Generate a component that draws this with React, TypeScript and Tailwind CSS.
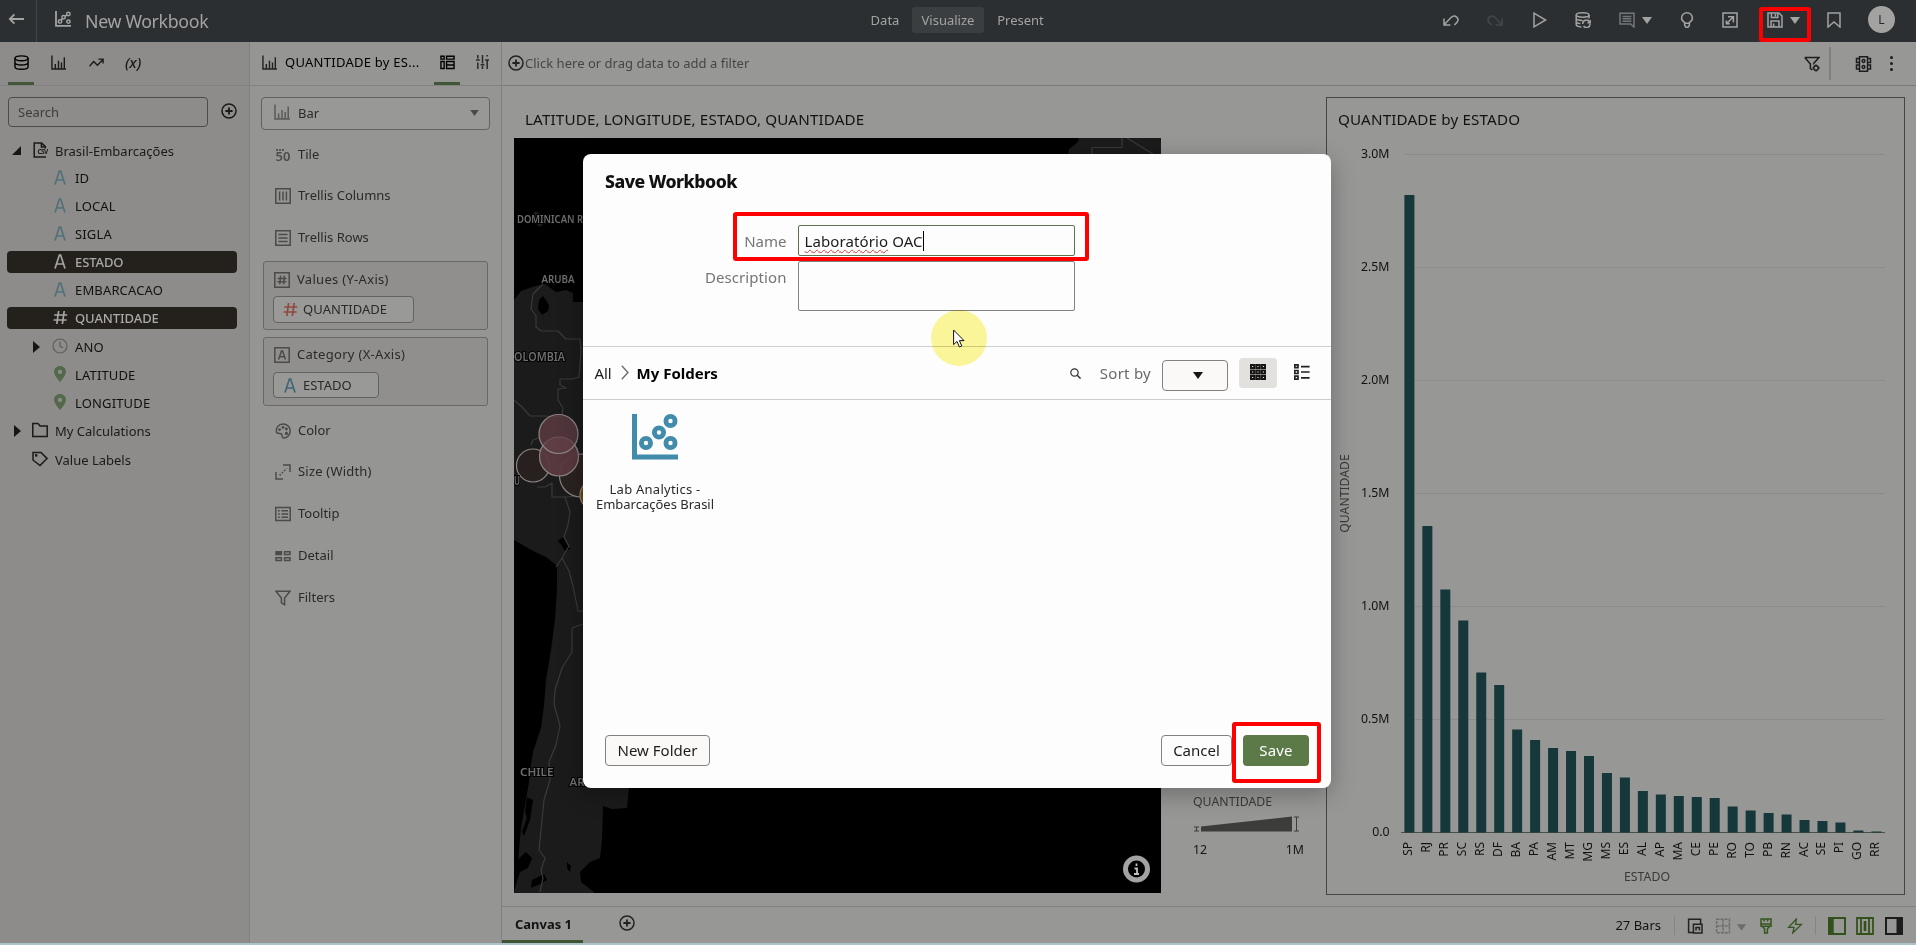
import type { ReactNode } from "react";

type IconProps = { className?: string; children?: ReactNode; box?: string };

function Svg({ className = "", children, box = "0 0 16 16" }: IconProps) {
  return (
    <svg viewBox={box} fill="none" stroke="currentColor" strokeWidth={1.5} className={`shrink-0 ${className}`}>
      {children}
    </svg>
  );
}

const S = "size-4";

const BarIcon = ({ className = S }: IconProps) => (
  <Svg className={className}>
    <path d="M1 0.5V15H16M4.6 15V9.5M8 15V6M11.2 15V8M14.2 15V2.5" />
  </Svg>
);
const DatabaseIcon = ({ className = S }: IconProps) => (
  <Svg className={className}>
    <ellipse cx="8" cy="3.5" rx="7" ry="2.6" />
    <path d="M1 3.5V12.4C1 14 4 15.2 8 15.2S15 14 15 12.4V3.5M1 8C1 9.4 4 10.6 8 10.6S15 9.4 15 8" />
  </Svg>
);
const PlusCircle = ({ className = S }: IconProps) => (
  <Svg className={className}>
    <circle cx="8" cy="8" r="7" />
    <path d="M8 4.4V11.6M4.4 8H11.6" strokeWidth={1.8} />
  </Svg>
);
const Caret = ({ className = "h-[7px] w-[10px]" }: IconProps) => (
  <svg viewBox="0 0 10 7" className={`shrink-0 ${className}`}>
    <path d="M0 0H10L5 7Z" fill="currentColor" />
  </svg>
);
const LetterA = ({ className = "" }: IconProps) => (
  <Svg className={`h-[15px] w-3 ${className}`} box="0 0 12 15">
    <path d="M1 14.5L5.4 1H6.6L11 14.5M2.6 10H9.4" strokeWidth={1.7} />
  </Svg>
);
const Hash = ({ className = "" }: IconProps) => (
  <Svg className={`size-[15px] ${className}`} box="0 0 15 15">
    <path d="M5.6 1L3.8 14M11.2 1L9.4 14M1.2 5H14.2M0.6 10H13.6" strokeWidth={1.7} />
  </Svg>
);
const Pin = () => (
  <svg viewBox="0 0 12 16" className="h-4 w-3 shrink-0 text-[#54694b]">
    <path d="M6 0C2.6 0 0 2.5 0 5.8C0 9.8 6 16 6 16S12 9.8 12 5.8C12 2.5 9.4 0 6 0ZM6 3.8A2.1 2.1 0 1 1 6 8A2.1 2.1 0 0 1 6 3.8Z" fill="currentColor" fillRule="evenodd" />
  </svg>
);
const ScatterIcon = ({ className = "" }: IconProps) => (
  <Svg className={className} box="0 0 46 46">
    <path d="M2.5 0V43H46" strokeWidth={5} />
    <circle cx="14" cy="29" r="4.6" strokeWidth={4.8} />
    <circle cx="27" cy="18.5" r="4.6" strokeWidth={4.8} />
    <circle cx="38.5" cy="7" r="4.6" strokeWidth={4.8} />
    <circle cx="38.5" cy="29" r="4.6" strokeWidth={4.8} />
  </Svg>
);

function Header() {
  return (
    <header className="flex h-[42px] shrink-0 items-center bg-[#2b2f32] text-[#a3a3a2]">
      <div className="flex w-[861px] items-center">
        <div className="flex h-[42px] w-[37px] items-center border-r border-[#42464a] pb-1 pl-2">
          <Svg className={S}>
            <path d="M16 8H2M6.4 3.4L1.8 8L6.4 12.6" strokeWidth={1.8} />
          </Svg>
        </div>
        <Svg className="mb-1 ml-[18px] size-4">
          <path d="M1 0V14.8H16" strokeWidth={1.8} />
          <circle cx="5" cy="10.4" r="1.7" />
          <circle cx="8.6" cy="6.2" r="1.7" />
          <circle cx="13.4" cy="3" r="1.7" />
          <circle cx="13.4" cy="10.6" r="1.7" />
          <path d="M6.2 9.2L7.4 7.6M9.9 5.2L12 4" />
        </Svg>
        <h1 className="ml-[14px] text-[17.8px] tracking-[-0.35px]">New Workbook</h1>
      </div>
      <nav className="flex items-center pb-0.5 text-[13px]">
        <span className="w-12 pt-0.5 text-center">Data</span>
        <span className="ml-[3px] flex h-[26px] w-[72px] items-center justify-center rounded-[3px] bg-[#3a3e40] pt-0.5">Visualize</span>
        <span className="ml-1 w-[65px] pt-0.5 text-center">Present</span>
      </nav>
      <div className="ml-auto flex items-center pr-[21px] pb-[3px]">
        <Svg className={S}>
          <path d="M1 6.5V13H7.4M1.4 12.6L8 5.6C12 1.8 17 6.6 14 10.4L11.4 13" />
        </Svg>
        <Svg className="ml-7 size-4 text-[#44484b]">
          <path d="M15 6.5V13H8.6M14.6 12.6L8 5.6C4 1.8 -1 6.6 2 10.4L4.6 13" />
        </Svg>
        <Svg className="ml-[29px] size-4">
          <path d="M2 1.2V14.8L13.6 8Z" />
        </Svg>
        <Svg className="ml-[27px] size-4">
          <ellipse cx="7.6" cy="3" rx="6.4" ry="2.2" />
          <path d="M1.2 3V12.6C1.2 14 3.6 14.8 6.4 14.9M14 3V6.4M1.2 6.2C1.2 7.4 4 8.4 7.6 8.4M1.2 9.5C1.2 10.6 3 11.4 5.4 11.6M7.8 12A3.5 3.5 0 0 1 14.4 10M15.2 8V10.8H12.4M15 11.8A3.5 3.5 0 0 1 8.6 14" />
        </Svg>
        <Svg className="ml-7 size-4 text-[#74777a]">
          <path d="M1 1.2H15V15L11.6 12H1ZM3.6 4.4H12.4M3.6 6.8H12.4M3.6 9.2H12.4" />
        </Svg>
        <Caret className="mt-0.5 ml-[7px] h-[7px] w-[10px]" />
        <Svg className="ml-[27px] size-4">
          <path d="M5.6 10.4C3.6 9.4 2.6 8 2.6 6A5.4 5.2 0 0 1 13.4 6C13.4 8 12.4 9.4 10.4 10.4" />
          <path d="M5.6 10V13.2L7 15.2H9L10.4 13.2V10M5.6 11.2H10.4" />
        </Svg>
        <Svg className="ml-[27px] size-4">
          <path d="M1 1H15V15H1ZM6 4.8H11.4V10.4M11.2 5L5 11.2M4.4 8.4V11.8H7.8" />
        </Svg>
        <Svg className="ml-[29px] size-4">
          <path d="M1 1H12L15 4V15H1ZM4.4 1V5.6H10.8V1M8.4 2V4.4M4 15V9H12V15M6.6 11.4V15" />
        </Svg>
        <Caret className="mt-0.5 ml-[7px] h-[7px] w-[10px]" />
        <Svg className="ml-[26px] size-4">
          <path d="M2 1H14V15L8 10L2 15Z" />
        </Svg>
        <div className="ml-[26px] flex size-[27px] items-center justify-center rounded-full bg-[#a2a2a1] text-[12px] text-[#22282c]">L</div>
      </div>
    </header>
  );
}

type Field = { name: string; icon: ReactNode; selected?: boolean; expandable?: boolean };
const blue = "text-[#527079]";
const fields: Field[] = [
  { name: "ID", icon: <LetterA className={blue} /> },
  { name: "LOCAL", icon: <LetterA className={blue} /> },
  { name: "SIGLA", icon: <LetterA className={blue} /> },
  { name: "ESTADO", icon: <LetterA className="text-[#a5a5a3]" />, selected: true },
  { name: "EMBARCACAO", icon: <LetterA className={blue} /> },
  { name: "QUANTIDADE", icon: <Hash className="text-[#a5a5a3]" />, selected: true },
  {
    name: "ANO",
    expandable: true,
    icon: (
      <Svg className="size-4 text-[#5f5d5b]">
        <circle cx="8" cy="8" r="7" strokeWidth={1.2} />
        <path d="M8 3.4V8.4L11 9.8" strokeWidth={1.2} />
      </Svg>
    ),
  },
  { name: "LATITUDE", icon: <Pin /> },
  { name: "LONGITUDE", icon: <Pin /> },
];

const RightArrow = ({ className = "" }: IconProps) => (
  <svg viewBox="0 0 7 12" className={`h-3 w-[7px] shrink-0 text-[#171615] ${className}`}>
    <path d="M0 0L7 6L0 12Z" fill="currentColor" />
  </svg>
);

function DataPanel() {
  return (
    <aside className="flex w-[250px] shrink-0 flex-col border-r border-[#80807e] bg-[#8e8c8a] text-[#1b1a19]">
      <div className="flex h-[44px] shrink-0 border-b border-[#82817f] pl-2">
        <div className="flex w-[26px] items-center justify-center border-b-[3px] border-[#42563a] text-black">
          <DatabaseIcon className="size-[15px]" />
        </div>
        <div className="flex items-center pb-[3px] pl-[17px]">
          <BarIcon className="size-[15px]" />
          <Svg className="ml-[23px] size-[15px]">
            <path d="M0.5 12L5 7L9 11L14.6 5M10 4.4H15V9" />
          </Svg>
          <span className="ml-[21px] text-[15px] font-medium italic tracking-[-0.2px]">(x)</span>
        </div>
      </div>
      <div className="mt-[11px] flex items-center pl-2">
        <div className="flex h-[30px] w-[200px] items-center rounded border border-[#4c4b49] pt-px pl-[9px] text-[13px] text-[#3d3c3a]">Search</div>
        <PlusCircle className="mb-[3px] ml-[13px] size-4" />
      </div>
      <div className="mt-[10px] flex flex-col text-[13px]">
        <div className="flex h-[27px] items-center pl-3">
          <svg viewBox="0 0 9 9" className="size-[9px] text-[#171615]">
            <path d="M9 0V9H0Z" fill="currentColor" />
          </svg>
          <Svg className="mb-0.5 ml-3 size-4">
            <path d="M13 15H1.2V1H8.6L12.4 4.6V6.4M8.4 1V5H12.6" />
            <text x="4.4" y="12.4" fontSize="6.6" fontWeight="700" fill="currentColor" stroke="none" textLength="11">CSV</text>
          </Svg>
          <span className="ml-[6px] pt-0.5">Brasil-Embarcações</span>
        </div>
        {fields.map((f) => (
          <div key={f.name} className={`flex items-center px-[7px] ${f.name === "QUANTIDADE" ? "h-[29px] pb-px" : "h-7"}`}>
            <div className={`flex h-[22px] w-[230px] items-center rounded ${f.selected ? "bg-[#24211d] font-medium text-[#a9a9a7]" : "text-[#111]"}`}>
              <span className="flex w-[43px] items-center pl-[26px]">{f.expandable && <RightArrow />}</span>
              <span className="flex w-[20px] items-center justify-center pb-0.5">{f.icon}</span>
              <span className={`ml-[5px] pt-0.5 ${f.selected ? "tracking-[-0.1px]" : "tracking-[0.15px]"}`}>{f.name}</span>
            </div>
          </div>
        ))}
        <div className="flex h-7 items-center pl-[14px]">
          <RightArrow />
          <Svg className="mb-0.5 ml-[11px] size-4">
            <path d="M0.8 1.4H6L8 4H15.2V14.6H0.8Z" />
          </Svg>
          <span className="ml-[7px] pt-0.5">My Calculations</span>
        </div>
        <div className="flex h-[29px] items-center pl-8">
          <Svg className="mb-0.5 size-4">
            <path d="M1 1.4H9L15 7.4L8 14.6L1 9Z" />
            <circle cx="4.2" cy="4.4" r="0.6" />
          </Svg>
          <span className="ml-[7px] pt-0.5">Value Labels</span>
        </div>
      </div>
    </aside>
  );
}

function Slot({ icon, label, className = "" }: { icon: ReactNode; label: string; className?: string }) {
  return (
    <div className={`flex items-center text-[13px] ${className}`}>
      <span className="flex w-4 justify-center text-[#4b4b49]">{icon}</span>
      <span className="ml-[7px]">{label}</span>
    </div>
  );
}

function GrammarPanel() {
  return (
    <aside className="flex w-[252px] shrink-0 flex-col border-r border-[#80807e] bg-[#959593] text-[#2b2a29]">
      <div className="flex h-[44px] shrink-0 border-b border-[#82827f] pl-3">
        <div className="flex w-[172px] items-center pb-[2px] text-black">
          <BarIcon className="size-[15px] text-[#222]" />
          <span className="ml-2 whitespace-nowrap text-[13px] tracking-[0.26px]">QUANTIDADE by ES...</span>
        </div>
        <div className="flex w-[26px] items-center justify-center border-b-[3px] border-[#42563a] text-black">
          <Svg className="size-[15px]">
            <path d="M1 1.4H4.4V4.4H1ZM7 1.4H15V4.4H7ZM1 7H4.4V14.4H1ZM7 7H15V14.4H7ZM7 10.6H15" />
          </Svg>
        </div>
        <div className="flex items-center pb-[3px] pl-4">
          <Svg className="h-[14px] w-[13px]" box="0 0 13 14">
            <path d="M1.8 0V3.4M1.8 7.6V14M0 5H3.8M6.5 0V8.4M6.5 11V14M4.6 9.8H8.4M11.2 0V1.6M11.2 5.4V14M9.2 5H13M6.5 4.6V5.6" />
          </Svg>
        </div>
      </div>
      <div className="mt-[11px] ml-[11px] flex h-[33px] w-[229px] items-center rounded border border-[#62625f] bg-[#989896] pr-[10px] pl-3 text-[13px]">
        <BarIcon className="mb-1 size-4 text-[#5a5a58]" />
        <span className="ml-2 pt-px">Bar</span>
        <Caret className="mb-px ml-auto h-[6px] w-[9px] text-[#4a4a48]" />
      </div>
      <div className="flex flex-col">
        <Slot
          className="mt-[11px] h-7 pl-[25px]"
          label="Tile"
          icon={
            <span className="flex flex-col items-center">
              <span className="flex h-0.5 w-2 self-start border-t-2 border-dotted border-[#555553]" />
              <span className="text-[13px] leading-[11px] font-semibold">50</span>
            </span>
          }
        />
        <Slot
          className="mt-[13px] h-7 pl-[25px]"
          label="Trellis Columns"
          icon={
            <Svg className={S}>
              <path d="M0.8 0.8H15.2V15.2H0.8ZM4.6 3.4V12.6M8 3.4V12.6M11.4 3.4V12.6" />
            </Svg>
          }
        />
        <Slot
          className="mt-[14px] h-7 pl-[25px]"
          label="Trellis Rows"
          icon={
            <Svg className={S}>
              <path d="M0.8 0.8H15.2V15.2H0.8ZM3.4 4.6H12.6M3.4 8H12.6M3.4 11.4H12.6" />
            </Svg>
          }
        />
        <div className="mt-[9px] ml-[13px] flex h-[69px] w-[225px] flex-col rounded-[3px] border border-[#686866] bg-[#908f8d] pl-[9px]">
          <Slot
            className="mt-[3px] h-[29px] pl-px tracking-[0.3px]"
            label="Values (Y-Axis)"
            icon={
              <Svg className={S}>
                <path d="M0.8 0.8H15.2V15.2H0.8ZM6.6 3.6L5.8 12.4M10.4 3.6L9.6 12.4M3.6 6.4H12.6M3.4 9.8H12.4" />
              </Svg>
            }
          />
          <div className="mt-[2px] flex h-[27px] w-[141px] items-center rounded border border-[#62625f] bg-[#999997] pl-[9px] text-[13px]">
            <Hash className="text-[#8f4a40]" />
            <span className="ml-[5px] tracking-[0.05px]">QUANTIDADE</span>
          </div>
        </div>
        <div className="mt-[7px] ml-[13px] flex h-[69px] w-[225px] flex-col rounded-[3px] border border-[#686866] bg-[#908f8d] pl-[9px]">
          <Slot
            className="mt-[2px] h-[29px] pl-px tracking-[0.3px]"
            label="Category (X-Axis)"
            icon={
              <Svg className={S}>
                <path d="M0.8 0.8H15.2V15.2H0.8ZM4.6 12.6L7.4 4H8.6L11.4 12.6M5.6 9.8H10.4" />
              </Svg>
            }
          />
          <div className="mt-[3px] flex h-[26px] w-[106px] items-center rounded border border-[#62625f] bg-[#999997] pl-[10px] text-[13px]">
            <LetterA className="text-[#3f6672]" />
            <span className="ml-[7px] pt-px">ESTADO</span>
          </div>
        </div>
        <Slot
          className="mt-[11px] h-7 pl-[25px]"
          label="Color"
          icon={
            <Svg className={S}>
              <path d="M1.4 9.2C0.6 4.6 3.6 1 8 1C12.2 1 15.2 4 15.2 8S12.2 15 8.6 15C6.6 15 7.4 13 6.8 11.4C6 9.6 3.4 11.6 1.4 9.2Z" />
              <circle cx="4.6" cy="6.6" r="0.7" />
              <circle cx="8" cy="4.4" r="0.7" />
              <circle cx="11.4" cy="6" r="0.7" />
              <circle cx="11.4" cy="10.4" r="0.9" />
            </Svg>
          }
        />
        <Slot
          className="mt-[13px] h-7 pl-[25px] tracking-[0.2px]"
          label="Size (Width)"
          icon={
            <Svg className={S}>
              <path d="M8 1H15V8M1 8V15H8" />
              <path d="M4.6 11.4L11.6 4.4" strokeDasharray="1.6 1.6" />
            </Svg>
          }
        />
        <Slot
          className="mt-[14px] h-7 pl-[25px]"
          label="Tooltip"
          icon={
            <Svg className={S}>
              <path d="M0.8 1.4H15.2V14.6H0.8ZM3 4.8H4.8M6.4 4.8H13M3 8H4.8M6.4 8H13M3 11.2H4.8M6.4 11.2H13" />
            </Svg>
          }
        />
        <Slot
          className="mt-[14px] h-7 pl-[25px]"
          label="Detail"
          icon={
            <Svg className={S}>
              <path d="M1 3.8H6.4V6.4H1ZM9.6 3.8H15V6.4H9.6ZM1 9.8H6.4V12.4H1ZM9.6 9.8H15V12.4H9.6Z" />
              <path d="M1 5H6.4" strokeWidth={2.4} />
            </Svg>
          }
        />
        <Slot
          className="mt-[14px] h-7 pl-[25px]"
          label="Filters"
          icon={
            <Svg className={S}>
              <path d="M1 1.2H15L9.6 8V14.6L6.4 12.8V8Z" />
            </Svg>
          }
        />
      </div>
    </aside>
  );
}

const mapLabel = "fill-[#6e6e6e] stroke-black font-semibold [paint-order:stroke]";

function MapView() {
  return (
    <svg viewBox="514 138 647 755" className="block h-[755px] w-[647px] bg-black">
      <g fill="#1b1b1b">
        <path d="M514 300L521 291L535 286L545 284L556 292L566 290L573 293V302L640 302V788H629L627 808L612 809L603 806L602 840L600 858L590 862L580 872L581 882L595 893H514L517 880L519 850L521 828L525 805L529 782L530 770L533 752L541 728L544 705L546 680L551 650L555 620L557 590V566L546 557L533 551L514 540Z" />
        <path d="M1079 138L1078 142L1069 149L1068 156H1161V138Z" />
        <path d="M530 216L536 211L540 214L549 216L545 222L540 227L534 222Z" />
      </g>
      <g fill="#000">
        <path d="M539 300L543 296L549 305L548 311L542 315L538 309Z" />
        <path d="M558 541L563 537L567 545L570 549L565 551L562 546Z" />
        <path d="M533 800L527 797L525 812L527 818L522 832L524 836L530 820Z" />
        <path d="M515 862L526 852L532 858L528 868L520 872L516 884Z" />
        <path d="M532 880L544 874L547 880L540 884L531 888Z" />
        <path d="M567 862L571 866L570 872L567 868Z" />
      </g>
      <g fill="none" stroke="#3a3a3a" strokeWidth="1.2" strokeLinejoin="round">
        <path d="M543 284L533 294L531 309L536 316L536 327L541 331L558 331L566 339L580 339L581 350L579 377L572 379H560V385L566 388L558 389V400L563 408L562 416" />
        <path d="M514 400L522 407L530 416L545 416L562 417" />
        <path d="M531 445L533 440L541 437M537 487L545 487L552 483V497L565 497L582 496" />
        <path d="M565 497L570 512L568 525L564 537L569 546L562 558L556 567M562 558L569 571L573 586L578 611L583 611" />
        <path d="M583 624L572 628L572 652L562 668L555 690L554 704L560 726L556 745L549 762L550 780L544 800L541 830L539 850L545 858L541 870L543 878L540 892" />
        <path d="M1092 156V147.5H1122V138M1127 138L1153 154" />
      </g>
      <g stroke="#8a8583" strokeWidth="1.2">
        <circle cx="581" cy="475.5" r="21.5" fill="#2a221e" />
        <circle cx="533" cy="465.5" r="16.5" fill="#2a2120" fillOpacity="0.9" />
        <circle cx="559" cy="456.5" r="19.5" fill="#5a3a40" fillOpacity="0.95" />
        <circle cx="558.5" cy="434" r="19.5" fill="#633f47" fillOpacity="0.75" />
        <circle cx="595" cy="495" r="15" fill="#6b4513" />
      </g>
      <g fontFamily="Noto Sans" strokeWidth="2">
        <text x="517" y="223" fontSize="10.4" textLength="66" lengthAdjust="spacingAndGlyphs" className={mapLabel}>DOMINICAN R</text>
        <text x="541.5" y="283" fontSize="10.6" textLength="33" lengthAdjust="spacingAndGlyphs" className={mapLabel}>ARUBA</text>
        <text x="514" y="361" fontSize="11.6" textLength="51" lengthAdjust="spacingAndGlyphs" className={mapLabel}>OLOMBIA</text>
        <text x="514" y="485" fontSize="11.6" textLength="6" lengthAdjust="spacingAndGlyphs" className={mapLabel}>U</text>
        <text x="520" y="775.5" fontSize="11.4" textLength="33.5" lengthAdjust="spacingAndGlyphs" className={mapLabel}>CHILE</text>
        <text x="569.5" y="785.5" fontSize="11.4" className={mapLabel}>AR</text>
      </g>
      <circle cx="1136.5" cy="869" r="13.5" fill="#a3a3a3" />
      <circle cx="1136.5" cy="869" r="8.5" fill="#000" />
      <path d="M1136.5 863.5V866M1134.5 868.5H1137V874M1134 874H1139" stroke="#c0c0c0" strokeWidth="1.8" fill="none" />
    </svg>
  );
}

const bars: [string, number][] = [
  ["SP", 195], ["RJ", 526], ["PR", 589.5], ["SC", 620.5], ["RS", 672.5], ["DF", 685], ["BA", 729.5], ["PA", 740], ["AM", 748],
  ["MT", 751], ["MG", 756], ["MS", 773], ["ES", 777.5], ["AL", 791], ["AP", 794.5], ["MA", 796], ["CE", 797], ["PE", 798],
  ["RO", 806.5], ["TO", 810.5], ["PB", 813], ["RN", 814.5], ["AC", 820], ["SE", 821], ["PI", 822.5], ["GO", 830.5], ["RR", 831.5],
];
const ticks: [string, number][] = [
  ["3.0M", 154.5], ["2.5M", 267.5], ["2.0M", 380.5], ["1.5M", 493.5], ["1.0M", 606.5], ["0.5M", 719.5], ["0.0", 832.5],
];

function BarChart() {
  return (
    <svg viewBox="1327 137 577 757" className="block h-[757px] w-[577px]" fontFamily="Noto Sans">
      {ticks.map(([label, y]) => (
        <g key={label}>
          <path d={`M${label === "0.0" ? 1401 : 1405} ${y}H1885`} stroke={label === "0.0" ? "#4d4d4c" : "#8b8b8a"} />
          <text x="1389.5" y={y + 3.4} fontSize="12.3" textAnchor="end" fill="#111">{label}</text>
        </g>
      ))}
      {bars.map(([label, top], i) => {
        const cx = 1409.4 + i * 17.96;
        return (
          <g key={label}>
            <rect x={cx - 5} y={top} width="10" height={832.5 - top} fill="#16383b" />
            <text transform={`translate(${cx + 3} 842) rotate(-90)`} fontSize="12" textAnchor="end" fill="#111">{label}</text>
          </g>
        );
      })}
      <text transform="translate(1349 493.5) rotate(-90)" fontSize="12.2" textAnchor="middle" fill="#3a3a39">QUANTIDADE</text>
      <text x="1647" y="881" fontSize="12.3" textAnchor="middle" fill="#3a3a39">ESTADO</text>
    </svg>
  );
}

function Workspace() {
  return (
    <main className="flex min-w-0 flex-1 flex-col bg-[#979796] text-[#131313]">
      <div className="flex h-[44px] shrink-0 items-center border-b border-[#7b7b7a] pl-[6px]">
        <PlusCircle className="mb-0.5 size-4 text-[#222]" />
        <span className="ml-[1px] pt-px text-[13px] tracking-[0.02px] text-[#454544]">Click here or drag data to add a filter</span>
        <Svg className="ml-auto size-4 text-[#1c1c1c]">
          <path d="M0.8 1.4H15L9.6 7.6M0.8 1.4L6.4 8V12.6L8.4 14M9.6 7.6V8.4" />
          <circle cx="12" cy="12" r="2.3" />
          <path d="M12 8.4V9.6M12 14.4V15.6M8.600 12H9.600M14.400 12H15.600" />
        </Svg>
        <span className="ml-[9px] h-[33px] w-0.5 bg-[#7f7f7e]" />
        <Svg className="ml-6 h-4 w-[17px] text-[#1c1c1c]" box="0 0 17 16">
          <path d="M4.5 0.8H12.5V15.2H4.5ZM4.5 2.5H1.5V6.5H4.5M4.5 9H1.5V13H4.5M12.5 2.5H15.5V6.5H12.5M12.5 9H15.5V13H12.5" />
          <circle cx="8.5" cy="5" r="1.4" />
          <circle cx="8.5" cy="11" r="1.4" />
        </Svg>
        <span className="mr-[23px] ml-[18px] flex flex-col gap-[3px]">
          <i className="size-[3px] rounded-full bg-[#1c1c1c]" />
          <i className="size-[3px] rounded-full bg-[#1c1c1c]" />
          <i className="size-[3px] rounded-full bg-[#1c1c1c]" />
        </span>
      </div>
      <div className="flex h-[821px] shrink-0 border-b border-[#818180]">
        <section className="ml-3 w-[647px] pt-[21px]">
          <h2 className="mb-[7px] h-6 pl-[11px] text-[15.2px] leading-6 tracking-[0.15px]">LATITUDE, LONGITUDE, ESTADO, QUANTIDADE</h2>
          <MapView />
        </section>
        <section className="flex w-[165px] flex-col justify-end pb-[48px] pl-8 text-[12.3px]">
          <span className="leading-4 text-[#3a3a39]">QUANTIDADE</span>
          <Svg className="mt-[6px] h-[17px] w-[110px] text-[#3c3c3b]" box="0 0 110 17">
            <path d="M8 10.5L99 0.5V15.5H8Z" fill="currentColor" stroke="none" />
            <path d="M1 11H6M3.5 11V15M1 15H6M101 1H106M103.5 1V15M101 15H106" strokeWidth={1} />
          </Svg>
          <span className="mt-[9px] flex w-[111px] justify-between leading-4">
            <span>12</span>
            <span>1M</span>
          </span>
        </section>
        <section className="mt-[11px] h-[798px] w-[579px] border border-[#454544]">
          <h2 className="h-[39px] pt-[9px] pl-[11px] text-[15.2px] leading-6 tracking-[0.15px]">QUANTIDADE by ESTADO</h2>
          <BarChart />
        </section>
      </div>
      <footer className="flex h-[36px] shrink-0 text-[13px]">
        <div className="flex w-[81px] items-center justify-center border-b-[3px] border-[#3f5431] pt-[3px] pl-0.5 font-bold">Canvas 1</div>
        <div className="flex flex-1 items-center pl-[36px]">
          <PlusCircle className="mb-[5px] size-4 text-[#222]" />
          <span className="ml-auto pt-px">27 Bars</span>
          <span className="ml-[13px] h-[19px] w-px bg-[#858584]" />
          <Svg className="mt-px ml-3 size-4 text-[#222]">
            <path d="M7 14.6H1.6V1.2H13.6V6M6.4 6.2H15V15H6.4ZM9 12.6V9.4H12.4V12.6" />
          </Svg>
          <Svg className="mt-px ml-3 size-4 text-[#6d6d6c]">
            <path d="M1.6 1.2H14.4V14.8H1.6ZM8 1.2V14.8M1.6 8H14.4" strokeDasharray="3 1" />
          </Svg>
          <Caret className="mt-[5px] ml-[6px] h-[7px] w-[9px] text-[#6d6d6c]" />
          <Svg className="mt-px ml-3 size-4 text-[#36551f]">
            <path d="M3 1H13V8.2H3ZM3 6H13M6.2 1V3.6M9.6 1V3.6M4.4 8.4L6.600 10.8V15H9.4V10.8L11.6 8.4" />
          </Svg>
          <Svg className="mt-px ml-[13px] size-4 text-[#36551f]">
            <path d="M9.4 1L1.6 9.4H7L5.8 15L14.4 6.4H8.6Z" strokeWidth={1.3} />
          </Svg>
          <span className="ml-3 h-[19px] w-px bg-[#858584]" />
          <Svg className="mt-px ml-3 h-[18px] w-[18px] text-[#33521b]" box="0 0 18 18">
            <path d="M1 1H17V17H1ZM3 1V17" strokeWidth={2} />
            <path d="M4 1V17" strokeWidth={3.5} />
          </Svg>
          <Svg className="mt-px ml-[10px] h-[18px] w-[18px] text-[#33521b]" box="0 0 18 18">
            <path d="M1 1H17V17H1ZM5 2V16M13 2V16" strokeWidth={1.8} />
            <path d="M9 4V14" strokeWidth={2.6} />
          </Svg>
          <Svg className="mt-px mr-[13px] ml-[11px] h-[18px] w-[18px] text-[#1d1d1d]" box="0 0 18 18">
            <path d="M1 1H17V17H1Z" strokeWidth={2} />
            <path d="M14 1V17" strokeWidth={5} />
          </Svg>
        </div>
      </footer>
      <div className="h-0.5 bg-[#a9c3c6]" />
    </main>
  );
}

function SaveDialog() {
  return (
    <div role="dialog" className="absolute top-[154px] left-[583px] flex h-[634px] w-[748px] flex-col rounded-lg bg-[#fdfdfd] text-[15px] text-[#1d1c1b] shadow-[0_6px_24px_rgba(0,0,0,0.28)]">
      <h2 className="mt-[15px] ml-[22px] h-[25px] text-[17.6px] leading-[25px] font-extrabold tracking-[-0.5px] text-[#111]">Save Workbook</h2>
      <div className="mt-[31px] flex flex-col gap-[5px] text-[#767573]">
        <div className="flex">
          <label className="w-[203.5px] pt-px text-right leading-[30px]">Name</label>
          <div className="ml-[11.5px] flex h-[31px] w-[277px] items-center rounded-[2px] border border-[#5d7350] pt-px pl-[5.5px] text-[#1d1c1b]">
            <span className="tracking-[0.1px] underline decoration-[#d8393b] decoration-wavy decoration-[1px] underline-offset-[2px] [text-decoration-skip-ink:none]">Laboratório</span>
            <span className="whitespace-pre tracking-[0.1px]"> OAC</span>
            <span className="h-5 w-px bg-black" />
          </div>
        </div>
        <div className="flex">
          <label className="w-[203.5px] text-right leading-[33px] tracking-[0.08px]">Description</label>
          <div className="ml-[11.5px] h-[50px] w-[277px] rounded-[2px] border border-[#82817f]" />
        </div>
      </div>
      <div className="mt-[35px] flex h-[54px] items-center border-y border-[#cfcecd] pl-[11.5px]">
        <span className="tracking-[-0.1px]">All</span>
        <Svg className="mb-0.5 ml-[9px] h-[15px] w-2 text-[#6a6967]" box="0 0 8 15">
          <path d="M0.8 0.8L7 7.5L0.8 14.2" strokeWidth={1.3} />
        </Svg>
        <span className="ml-2 font-bold text-black">My Folders</span>
        <Svg className="ml-auto size-[11px] text-[#333]" box="0 0 11 11">
          <circle cx="4.5" cy="4.5" r="3.7" strokeWidth={1.2} />
          <path d="M7.2 7.2L10.6 10.6" />
        </Svg>
        <span className="ml-[19px] tracking-[0.25px] text-[#6a6967]">Sort by</span>
        <div className="mt-1 ml-[11px] flex h-[31px] w-[66px] items-center justify-center rounded border border-[#82817f] bg-[#fbf9f8] pl-1.5">
          <Caret className="h-[7px] w-[10px] text-[#161513]" />
        </div>
        <div className="ml-[11px] flex h-[30px] w-[38px] items-center justify-center rounded bg-[#e2e1de] pb-0.5">
          <Svg className="size-4 text-[#161513]">
            <path d="M1 1H4.2V3.9H1ZM6.4 1H9.6V3.9H6.4ZM11.8 1H15V3.9H11.8ZM1 6.5H4.2V9.5H1ZM6.4 6.5H9.6V9.5H6.4ZM11.8 6.5H15V9.5H11.8ZM1 12.1H4.2V15H1ZM6.4 12.1H9.6V15H6.4ZM11.8 12.1H15V15H11.8Z" strokeWidth={2} />
          </Svg>
        </div>
        <Svg className="mr-[21px] mb-0.5 ml-[17px] size-4 text-[#222]">
          <path d="M0.8 0.8H4V3.7H0.8ZM0.8 6.5H4V9.5H0.8ZM0.8 12.2H4V15.2H0.8ZM7 2.6H15.6M7 8H15.6M7 13.8H15.6" strokeWidth={1.7} />
        </Svg>
      </div>
      <div className="flex flex-1 pt-[14px] pl-[7px]">
        <div className="flex w-[130px] flex-col items-center">
          <ScatterIcon className="size-[46px] text-[#418bab]" />
          <div className="mt-[22px] text-center text-[13px] leading-[15px] text-[#2c2b2a]">
            <span className="tracking-[0.25px]">Lab Analytics -</span>
            <br />
            Embarcações Brasil
          </div>
        </div>
      </div>
      <div className="mb-[22px] flex items-center pr-[22px] pl-[22px] text-[15px]">
        <button className="h-[31px] w-[105px] rounded border border-[#82817f] bg-[#fbf9f8]">New Folder</button>
        <button className="ml-auto h-[31px] w-[71px] rounded border border-[#82817f] bg-[#fdfcfc]">Cancel</button>
        <button className="ml-[11px] h-[31px] w-[66px] rounded bg-[#5b7a48] tracking-[0.2px] text-white">Save</button>
      </div>
    </div>
  );
}

const highlight = "absolute rounded-[3px] border-4 border-[#fe0000]";

export default function App() {
  return (
    <div className="relative flex h-[945px] w-[1916px] flex-col overflow-hidden bg-[#a9c3c6] font-['Noto_Sans',sans-serif]">
      <Header />
      <div className="flex h-[903px]">
        <div className="flex h-[901px]">
          <DataPanel />
          <GrammarPanel />
        </div>
        <Workspace />
      </div>
      <SaveDialog />
      <div className={`${highlight} top-[7px] left-[1759px] h-[35px] w-[52px]`} />
      <div className={`${highlight} top-[212px] left-[733px] h-[49px] w-[356px]`} />
      <div className={`${highlight} top-[722px] left-[1232px] h-[61px] w-[89px]`} />
      <div className="absolute top-[310px] left-[931px] size-[56px] rounded-full bg-[#fdf79a] mix-blend-multiply" />
      <svg viewBox="0 0 12 19" className="absolute top-[329px] left-[953px] h-[19px] w-3">
        <path d="M0.6 1V15.6L4 12.4L6.4 18L8.8 17L6.4 11.6H11Z" fill="#fff" stroke="#111" strokeWidth="1" />
      </svg>
    </div>
  );
}
